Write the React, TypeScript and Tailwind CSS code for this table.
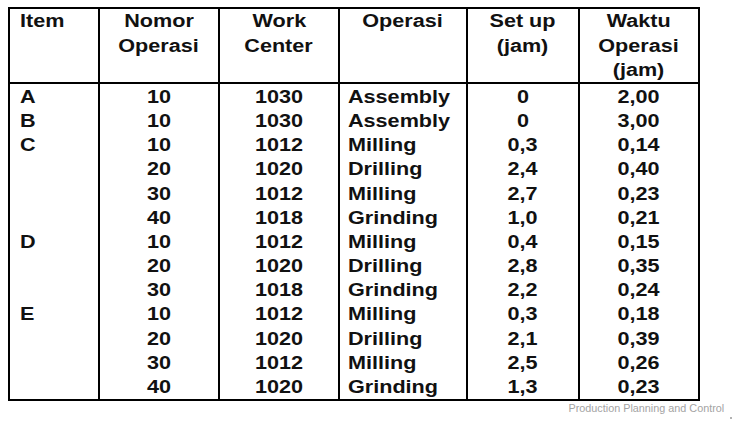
import React from "react";

type Align = "left" | "center";

type Col = {
  header: string[];
  rows: string[];
  headAlign: Align;
  align: Align;
  width: string;
  headPad: string;
  pad: string;
};

const cols: Col[] = [
  {
    header: ["Item"],
    rows: ["A", "B", "C", "", "", "", "D", "", "", "E", "", "", ""],
    headAlign: "left",
    align: "left",
    width: "w-[88px]",
    headPad: "pl-[10px]",
    pad: "pl-[10px]",
  },
  {
    header: ["Nomor", "Operasi"],
    rows: ["10", "10", "10", "20", "30", "40", "10", "20", "30", "10", "20", "30", "40"],
    headAlign: "center",
    align: "center",
    width: "w-[120px]",
    headPad: "",
    pad: "",
  },
  {
    header: ["Work", "Center"],
    rows: ["1030", "1030", "1012", "1020", "1012", "1018", "1012", "1020", "1018", "1012", "1020", "1012", "1020"],
    headAlign: "center",
    align: "center",
    width: "w-[120px]",
    headPad: "",
    pad: "",
  },
  {
    header: ["Operasi"],
    rows: [
      "Assembly",
      "Assembly",
      "Milling",
      "Drilling",
      "Milling",
      "Grinding",
      "Milling",
      "Drilling",
      "Grinding",
      "Milling",
      "Drilling",
      "Milling",
      "Grinding",
    ],
    headAlign: "center",
    align: "left",
    width: "w-[128px]",
    headPad: "",
    pad: "pl-[8px]",
  },
  {
    header: ["Set up", "(jam)"],
    rows: ["0", "0", "0,3", "2,4", "2,7", "1,0", "0,4", "2,8", "2,2", "0,3", "2,1", "2,5", "1,3"],
    headAlign: "center",
    align: "center",
    width: "w-[112px]",
    headPad: "",
    pad: "",
  },
  {
    header: ["Waktu", "Operasi", "(jam)"],
    rows: ["2,00", "3,00", "0,14", "0,40", "0,23", "0,21", "0,15", "0,35", "0,24", "0,18", "0,39", "0,26", "0,23"],
    headAlign: "center",
    align: "center",
    width: "w-[120px]",
    headPad: "",
    pad: "",
  },
];

function Line({ text, align, h }: { text: string; align: Align; h: string }) {
  return (
    <div className={`${h} ${align === "center" ? "text-center" : "text-left"} whitespace-nowrap`}>
      <span
        className={`inline-block scale-x-[1.2] ${align === "center" ? "origin-center" : "origin-left"}`}
      >
        {text || "\u00a0"}
      </span>
    </div>
  );
}

export default function App() {
  return (
    <div
      className="w-[738px] h-[421px] bg-white text-[#111] overflow-hidden"
      style={{ fontFamily: '"Liberation Sans", Arial, sans-serif' }}
    >
      <div className="pt-[7px] pl-[8px]">
        <div className="flex w-[692px] border-2 border-black font-bold text-[18px]">
          {cols.map((c, i) => (
            <div
              key={i}
              className={`${c.width} flex flex-col ${i > 0 ? "border-l-2 border-black" : ""}`}
            >
              <div className={`h-[75px] border-b-2 border-black leading-[24.5px] ${c.headPad}`}>
                {c.header.map((t, j) => (
                  <Line key={j} text={t} align={c.headAlign} h="h-[24.5px]" />
                ))}
              </div>
              <div className={`pt-[1px] leading-[24.17px] ${c.pad}`}>
                {c.rows.map((t, j) => (
                  <Line key={j} text={t} align={c.align} h="h-[24.17px]" />
                ))}
              </div>
            </div>
          ))}
        </div>
        <div className="flex justify-end w-[716px] mt-[1px]">
          <span className="text-[10.5px] leading-[12px] text-[#a3a3a3] inline-block scale-x-[1.03] origin-right">
            Production Planning and Control
          </span>
        </div>
        <div className="flex justify-end w-[724px] mt-[3px]">
          <span className="w-[2px] h-[2px] rounded-full bg-[#999]" />
        </div>
      </div>
    </div>
  );
}
